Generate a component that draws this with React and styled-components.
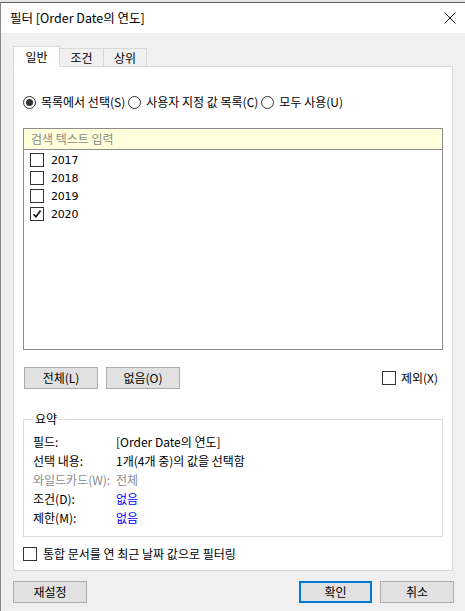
import React from "react";
import styled, { createGlobalStyle } from "styled-components";

const Global = createGlobalStyle`
  html, body { margin: 0; padding: 0; background: #f0f0f0; }
  body { font-family: "Noto Sans CJK KR", "Noto Sans", sans-serif; font-size: 12px; color: #000; }
`;

const Window = styled.div`
  width: 465px;
  height: 611px;
  box-sizing: border-box;
  background: #f0f0f0;
  border-top: 2px solid #e6e6e6;
  display: flex;
  flex-direction: column;
  position: relative;
  overflow: hidden;
`;

const Frame = styled.div`
  flex: 1;
  display: flex;
  flex-direction: column;
  border-top: 1px solid #5f5f5f;
  border-left: 1px solid #8a8a8a;
`;

const TitleBar = styled.div`
  height: 30px;
  background: #fff;
  display: flex;
  align-items: center;
  justify-content: space-between;
  padding: 0 8px 0 9px;
  font-size: 12.5px;
  line-height: 16px;
`;

const Close = styled.svg`
  width: 12px;
  height: 12px;
  margin-right: 1px;
`;

const Body = styled.div`
  padding: 12px 12px 0 12px;
  display: flex;
  flex-direction: column;
`;

const TabRow = styled.div`
  display: flex;
  align-items: flex-end;
  height: 21px;
  position: relative;
  z-index: 1;
`;

const Tab = styled.div`
  box-sizing: border-box;
  width: ${(p) => p.$w}px;
  height: ${(p) => (p.$active ? 21 : 18)}px;
  background: ${(p) => (p.$active ? "#fff" : "#f0f0f0")};
  border: 1px solid #d9d9d9;
  border-bottom: ${(p) => (p.$active ? "1px solid #fff" : "none")};
  margin-left: ${(p) => (p.$first ? 0 : -1)}px;
  display: flex;
  align-items: center;
  justify-content: center;
  line-height: 14px;
  padding-top: ${(p) => (p.$active ? 0 : 1)}px;
  margin-bottom: ${(p) => (p.$active ? -1 : 0)}px;
`;

const Panel = styled.div`
  box-sizing: border-box;
  width: 440px;
  height: 505px;
  background: #fff;
  border: 1px solid #d9d9d9;
  padding: 27px 9px 0 9px;
  display: flex;
  flex-direction: column;
`;

const RadioRow = styled.div`
  display: flex;
  align-items: center;
  height: 16px;
  line-height: 16px;
  white-space: nowrap;
`;

const RadioItem = styled.label`
  display: flex;
  align-items: center;
  margin-right: 3px;
`;

const RadioCircle = styled.span`
  box-sizing: border-box;
  width: 13px;
  height: 13px;
  border-radius: 50%;
  border: 1px solid #333;
  display: flex;
  align-items: center;
  justify-content: center;
  margin-right: 5px;
  &::after {
    content: "";
    width: 7px;
    height: 7px;
    border-radius: 50%;
    background: ${(p) => (p.$checked ? "#333" : "transparent")};
  }
`;

const ListBox = styled.div`
  box-sizing: border-box;
  margin-top: 18px;
  width: 420px;
  height: 222px;
  border: 1px solid #8c8c8c;
  display: flex;
  flex-direction: column;
`;

const Search = styled.div`
  height: 20px;
  background: #ffffdc;
  border-bottom: 1px solid #8c8c8c;
  color: #8a8a8a;
  padding-left: 7px;
  display: flex;
  align-items: center;
  line-height: 16px;
`;

const Items = styled.div`
  padding-top: 1px;
  display: flex;
  flex-direction: column;
`;

const Item = styled.div`
  height: 18px;
  display: flex;
  align-items: center;
  padding-left: 6px;
  font-family: "DejaVu Sans", "Noto Sans", sans-serif;
  font-size: 11px;
  letter-spacing: -0.2px;
`;

const Box = styled.span`
  box-sizing: border-box;
  width: 14px;
  height: 14px;
  border: 1px solid #333;
  background: #fff;
  margin-right: ${(p) => p.$gap || 7}px;
  display: flex;
  align-items: center;
  justify-content: center;
  flex-shrink: 0;
`;

const ButtonRow = styled.div`
  display: flex;
  align-items: center;
  margin-top: 17px;
  height: 22px;
  padding-right: 5px;
`;

const Button = styled.div`
  box-sizing: border-box;
  width: ${(p) => p.$w || 74}px;
  height: 22px;
  background: #e1e1e1;
  border: ${(p) => (p.$primary ? "2px solid #0078d7" : "1px solid #adadad")};
  display: flex;
  align-items: center;
  justify-content: center;
  line-height: 14px;
  margin-left: ${(p) => p.$ml || 0}px;
`;

const Spacer = styled.div`
  flex: 1;
`;

const CheckLabel = styled.label`
  display: flex;
  align-items: center;
  line-height: 16px;
`;

const Group = styled.fieldset`
  box-sizing: border-box;
  margin: 23px 0 0 0;
  width: 420px;
  height: 125px;
  border: 1px solid #dcdcdc;
  padding: 6px 9px 0 9px;
  min-width: 0;
`;

const Legend = styled.legend`
  padding: 0 2px;
  margin-left: 0px;
  line-height: 14px;
`;

const SummaryGrid = styled.div`
  display: grid;
  grid-template-columns: 83px 1fr;
  grid-auto-rows: 19px;
  align-items: center;
  line-height: 16px;
`;

const Cell = styled.div`
  color: ${(p) => p.$color || "#000"};
  white-space: nowrap;
`;

const BottomCheck = styled(CheckLabel)`
  margin-top: 9px;
  height: 16px;
`;

const Footer = styled.div`
  display: flex;
  align-items: center;
  padding: 10px 11px 0 12px;
`;

const Check = () => (
  <svg width="10" height="10" viewBox="0 0 10 10">
    <path d="M1.5 5.2 L4 7.8 L8.6 1.6" fill="none" stroke="#111" strokeWidth="1.6" />
  </svg>
);

export default function App() {
  return (
    <>
      <Global />
      <Window>
        <Frame>
          <TitleBar>
            <span>필터 [Order Date의 연도]</span>
            <Close viewBox="0 0 12 12">
              <path d="M0.5 0.5 L11.5 11.5 M11.5 0.5 L0.5 11.5" stroke="#111" strokeWidth="1" />
            </Close>
          </TitleBar>
          <Body>
            <TabRow>
              <Tab $first $active $w={47}>일반</Tab>
              <Tab $w={45}>조건</Tab>
              <Tab $w={44}>상위</Tab>
            </TabRow>
            <Panel>
              <RadioRow>
                <RadioItem>
                  <RadioCircle $checked />
                  목록에서 선택(S)
                </RadioItem>
                <RadioItem>
                  <RadioCircle />
                  사용자 지정 값 목록(C)
                </RadioItem>
                <RadioItem>
                  <RadioCircle />
                  모두 사용(U)
                </RadioItem>
              </RadioRow>
              <ListBox>
                <Search>검색 텍스트 입력</Search>
                <Items>
                  {["2017", "2018", "2019", "2020"].map((y) => (
                    <Item key={y}>
                      <Box>{y === "2020" && <Check />}</Box>
                      {y}
                    </Item>
                  ))}
                </Items>
              </ListBox>
              <ButtonRow>
                <Button $ml={1}>전체(L)</Button>
                <Button $ml={8}>없음(O)</Button>
                <Spacer />
                <CheckLabel>
                  <Box $gap={5} />
                  제외(X)
                </CheckLabel>
              </ButtonRow>
              <Group>
                <Legend>요약</Legend>
                <SummaryGrid>
                  <Cell>필드:</Cell>
                  <Cell>[Order Date의 연도]</Cell>
                  <Cell>선택 내용:</Cell>
                  <Cell>1개(4개 중)의 값을 선택함</Cell>
                  <Cell $color="#8a8a8a">와일드카드(W):</Cell>
                  <Cell $color="#8a8a8a">전체</Cell>
                  <Cell>조건(D):</Cell>
                  <Cell $color="#0000ff">없음</Cell>
                  <Cell>제한(M):</Cell>
                  <Cell $color="#0000ff">없음</Cell>
                </SummaryGrid>
              </Group>
              <BottomCheck>
                <Box $gap={6} />
                통합 문서를 연 최근 날짜 값으로 필터링
              </BottomCheck>
            </Panel>
          </Body>
          <Footer>
            <Button>재설정</Button>
            <Spacer />
            <Button $primary $w={73}>확인</Button>
            <Button $ml={8}>취소</Button>
          </Footer>
        </Frame>
      </Window>
    </>
  );
}
